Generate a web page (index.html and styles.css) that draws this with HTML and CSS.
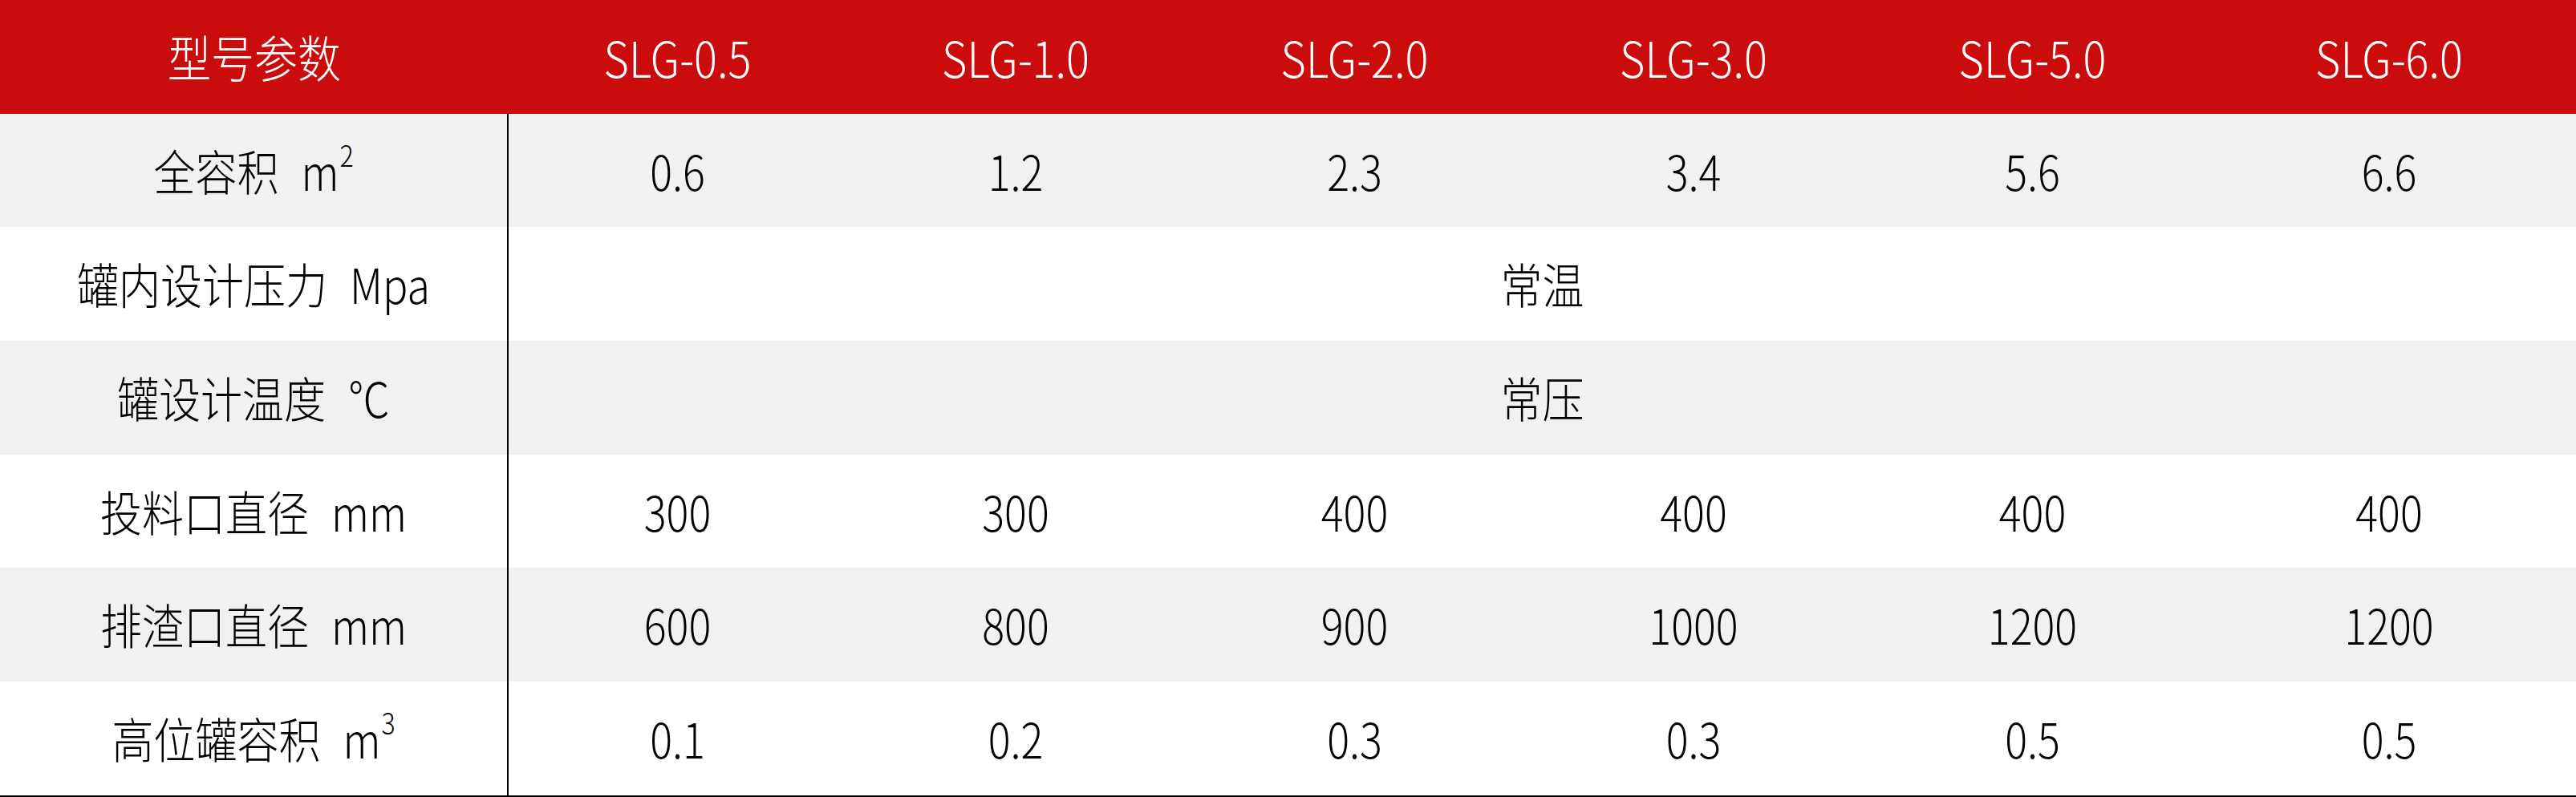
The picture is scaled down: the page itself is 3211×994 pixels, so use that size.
FILE: index.html
```html
<!DOCTYPE html>
<html lang="zh-CN">
<head>
<meta charset="utf-8">
<title>型号参数</title>
<link rel="stylesheet" href="styles.css">
</head>
<body>
<div class="spec">
  <div class="row head">
    <div class="cell"><span class="t">型号参数</span></div>
    <div class="cell"><span class="t">SLG-0.5</span></div>
    <div class="cell"><span class="t">SLG-1.0</span></div>
    <div class="cell"><span class="t">SLG-2.0</span></div>
    <div class="cell"><span class="t">SLG-3.0</span></div>
    <div class="cell"><span class="t">SLG-5.0</span></div>
    <div class="cell"><span class="t">SLG-6.0</span></div>
  </div>
  <div class="row gray">
    <div class="cell label"><span class="t">全容积<span class="unit">m<sup>2</sup></span></span></div>
    <div class="cell"><span class="t">0.6</span></div>
    <div class="cell"><span class="t">1.2</span></div>
    <div class="cell"><span class="t">2.3</span></div>
    <div class="cell"><span class="t">3.4</span></div>
    <div class="cell"><span class="t">5.6</span></div>
    <div class="cell"><span class="t">6.6</span></div>
  </div>
  <div class="row">
    <div class="cell label"><span class="t">罐内设计压力<span class="unit">Mpa</span></span></div>
    <div class="cell span"><span class="t">常温</span></div>
  </div>
  <div class="row gray">
    <div class="cell label"><span class="t">罐设计温度<span class="unit">℃</span></span></div>
    <div class="cell span"><span class="t">常压</span></div>
  </div>
  <div class="row">
    <div class="cell label"><span class="t">投料口直径<span class="unit">mm</span></span></div>
    <div class="cell"><span class="t">300</span></div>
    <div class="cell"><span class="t">300</span></div>
    <div class="cell"><span class="t">400</span></div>
    <div class="cell"><span class="t">400</span></div>
    <div class="cell"><span class="t">400</span></div>
    <div class="cell"><span class="t">400</span></div>
  </div>
  <div class="row gray">
    <div class="cell label"><span class="t">排渣口直径<span class="unit">mm</span></span></div>
    <div class="cell"><span class="t">600</span></div>
    <div class="cell"><span class="t">800</span></div>
    <div class="cell"><span class="t">900</span></div>
    <div class="cell"><span class="t">1000</span></div>
    <div class="cell"><span class="t">1200</span></div>
    <div class="cell"><span class="t">1200</span></div>
  </div>
  <div class="row">
    <div class="cell label"><span class="t">高位罐容积<span class="unit">m<sup>3</sup></span></span></div>
    <div class="cell"><span class="t">0.1</span></div>
    <div class="cell"><span class="t">0.2</span></div>
    <div class="cell"><span class="t">0.3</span></div>
    <div class="cell"><span class="t">0.3</span></div>
    <div class="cell"><span class="t">0.5</span></div>
    <div class="cell"><span class="t">0.5</span></div>
  </div>
</div>
</body>
</html>
```

FILE: styles.css
```css
html, body {
  margin: 0;
  padding: 0;
  background: #ffffff;
}

.spec {
  width: 3211px;
  font-family: "Noto Sans CJK SC", "Noto Sans", sans-serif;
  font-weight: 300;
  font-size: 52px;
  color: #000000;
  border-bottom: 2px solid #000000;
}

.row {
  display: grid;
  grid-template-columns: 634px 421px 422px 423px 422px 423px 1fr;
  height: 141.7px;
  background: #ffffff;
}

.row.gray {
  background: #f1f1f1;
}

.row.head {
  background: #ca0c0c;
  color: #ffffff;
  font-size: 54px;
}

.cell {
  display: flex;
  align-items: center;
  justify-content: center;
  overflow: hidden;
}

.cell.label {
  border-right: 2px solid #000000;
}

.cell.span {
  grid-column: 2 / -1;
}

.t {
  display: inline-block;
  white-space: nowrap;
  transform: scaleY(1.15);
  line-height: 1;
}

.unit {
  margin-left: 28px;
}

.unit sup {
  font-size: 32px;
  vertical-align: top;
  position: relative;
  top: -8px;
  margin-left: 1px;
}
```
